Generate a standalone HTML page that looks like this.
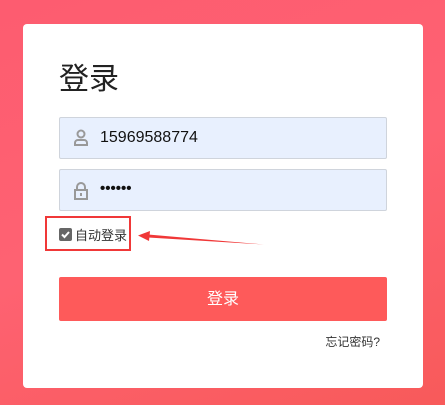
<!DOCTYPE html>
<html><head><meta charset="utf-8"><style>
*{margin:0;padding:0;box-sizing:border-box}
body{width:445px;height:405px;overflow:hidden;background:linear-gradient(160deg,#fd5c70 0%,#fe6272 50%,#f85a5a 100%);font-family:"Liberation Sans","Noto Sans CJK SC",sans-serif;position:relative}
.card{position:absolute;left:23px;top:24px;width:400px;height:364px;background:#fff;border-radius:4px}
.title{position:absolute;left:59px;top:62px;font-size:30px;color:#222;line-height:36px}
.inp{position:absolute;left:59px;width:328px;height:42px;background:#e8f0fe;border:1px solid #cfd4dc;border-radius:2px}
.inp svg{position:absolute;left:13px;top:11px}
.inp span{position:absolute;left:40px;top:11px;font-size:16px;color:#111}
.box{position:absolute;left:45px;top:216px;width:86px;height:35px;border:2px solid #f03838}
.cb{position:absolute;left:59px;top:228px;width:13px;height:13px;background:#666;border-radius:2px}
.lbl{position:absolute;left:75px;top:225px;font-size:13px;color:#333}
.btn{position:absolute;left:59px;top:277px;width:328px;height:44px;background:#fe5a5a;border-radius:2px;color:#fff;font-size:16px;text-align:center;line-height:46px}
.fg{position:absolute;right:65px;top:333px;font-size:12px;color:#333}
</style></head><body>
<div class="card"></div>
<div class="title">登录</div>
<div class="inp" style="top:117px"><svg width="16" height="18" viewBox="0 0 16 18"><circle cx="8" cy="5" r="3.5" fill="none" stroke="#999" stroke-width="2"/><path d="M2 16v-2a3 3 0 0 1 3-3h6a3 3 0 0 1 3 3v2z" fill="none" stroke="#999" stroke-width="2"/></svg><span>15969588774</span></div>
<div class="inp" style="top:169px"><svg width="16" height="20" viewBox="0 0 16 20"><path d="M4 9V6a4 4 0 0 1 8 0v3" fill="none" stroke="#999" stroke-width="2"/><rect x="2" y="9" width="12" height="9" fill="none" stroke="#999" stroke-width="2"/><rect x="7" y="12" width="2" height="3" fill="#999"/></svg><span style="top:10px;font-size:15px;font-weight:bold;letter-spacing:0px">••••••</span></div>
<div class="box"></div>
<div class="cb"><svg width="13" height="13" viewBox="0 0 13 13"><path d="M3 6.5l2.5 2.5 4.5-5" fill="none" stroke="#fff" stroke-width="2"/></svg></div>
<div class="lbl">自动登录</div>
<svg style="position:absolute;left:136px;top:228px" width="130" height="20" viewBox="0 0 130 20"><path d="M12 6.5L128 16.5L12 9.5z" fill="#f03838"/><path d="M2 7.5L14 3L13 13z" fill="#f03838"/></svg>
<div class="btn">登录</div>
<div class="fg">忘记密码?</div>
</body></html>
